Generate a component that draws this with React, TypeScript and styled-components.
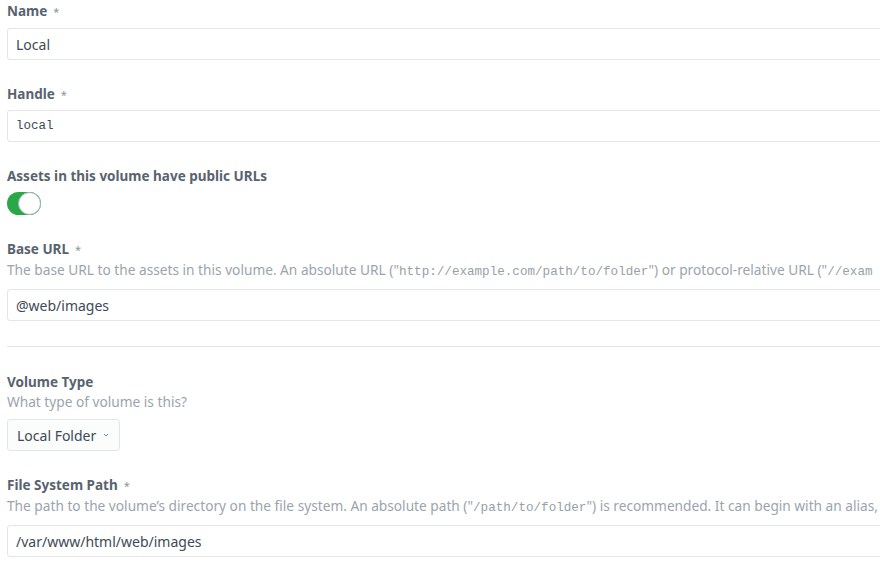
import React from "react";
import styled, { createGlobalStyle } from "styled-components";

const Global = createGlobalStyle`
  html, body { margin: 0; padding: 0; background: #fff; overflow: hidden; }
  body { font-family: "Noto Sans", "Open Sans", sans-serif; }
`;

const Page = styled.div`
  width: 880px;
  height: 571px;
  overflow: hidden;
  background: #fff;
`;

const Form = styled.div`
  width: 940px;
  padding: 2px 0 0 7px;
  display: flex;
  flex-direction: column;
`;

const Field = styled.div`
  display: flex;
  flex-direction: column;
  margin-bottom: 25px;
`;

const Heading = styled.div<{ $gap?: number }>`
  font-size: 13.5px;
  font-weight: 700;
  line-height: 18px;
  color: #58636f;
  margin-bottom: ${(p) => p.$gap ?? 7}px;
`;

const Required = styled.span`
  color: #8a949e;
  font-weight: 400;
  margin-left: 6px;
  font-size: 11px;
`;

const Instructions = styled.div`
  font-size: 13.7px;
  line-height: 20px;
  color: #9ba4ad;
  white-space: nowrap;
  margin-bottom: 7px;
`;

const Code = styled.code`
  font-family: "Liberation Mono", "DejaVu Sans Mono", monospace;
  font-size: 12.6px;
  color: #979fa8;
`;

const TextInput = styled.div<{ $mono?: boolean }>`
  box-sizing: border-box;
  height: 32px;
  border: 1px solid #e3e6e9;
  border-radius: 3px;
  padding: 0 8px;
  display: flex;
  align-items: center;
  font-family: ${(p) =>
    p.$mono ? '"Liberation Mono", "DejaVu Sans Mono", monospace' : '"Noto Sans", "Open Sans", sans-serif'};
  font-size: ${(p) => (p.$mono ? "12.5px" : "14px")};
  color: #3e4a56;
`;

const Toggle = styled.div`
  width: 34px;
  height: 23px;
  border-radius: 12px;
  background: #29a848;
  position: relative;
`;

const Knob = styled.div`
  position: absolute;
  right: 0;
  top: 0;
  width: 23px;
  height: 23px;
  border-radius: 50%;
  box-sizing: border-box;
  background: #fff;
  border: 1px solid #a9b0b6;
`;

const Divider = styled.hr`
  border: 0;
  border-top: 1px solid #e4e7ea;
  margin: 0 0 26px 0;
`;

const SelectBtn = styled.div`
  align-self: flex-start;
  box-sizing: border-box;
  height: 32px;
  padding: 0 10px 0 9px;
  border: 1px solid #e3e6e9;
  border-radius: 3px;
  background: #fbfcfc;
  display: flex;
  align-items: center;
  gap: 7px;
  font-size: 14px;
  color: #3e4a56;
`;

const Chevron = styled.svg`
  width: 6px;
  height: 6px;
`;

export default function App() {
  return (
    <Page>
      <Global />
      <Form>
        <Field>
          <Heading>
            Name<Required>*</Required>
          </Heading>
          <TextInput>Local</TextInput>
        </Field>
        <Field>
          <Heading $gap={6}>
            Handle<Required>*</Required>
          </Heading>
          <TextInput $mono>local</TextInput>
        </Field>
        <Field>
          <Heading>Assets in this volume have public URLs</Heading>
          <Toggle>
            <Knob />
          </Toggle>
        </Field>
        <Field>
          <Heading $gap={1}>
            Base URL<Required>*</Required>
          </Heading>
          <Instructions>
            The base URL to the assets in this volume. An absolute URL ("<Code>http://example.com/path/to/folder</Code>") or
            protocol-relative URL ("<Code>//exam</Code>
          </Instructions>
          <TextInput>@web/images</TextInput>
        </Field>
        <Divider />
        <Field>
          <Heading $gap={1}>Volume Type</Heading>
          <Instructions>What type of volume is this?</Instructions>
          <SelectBtn>
            Local Folder
            <Chevron viewBox="0 0 6 6">
              <path d="M1 2 L3 4 L5 2" fill="none" stroke="#7b8793" strokeWidth="1" />
            </Chevron>
          </SelectBtn>
        </Field>
        <Field>
          <Heading $gap={1}>
            File System Path<Required>*</Required>
          </Heading>
          <Instructions>
            The path to the volume’s directory on the file system. An absolute path ("<Code>/path/to/folder</Code>") is
            recommended. It can begin with an alias,
          </Instructions>
          <TextInput>/var/www/html/web/images</TextInput>
        </Field>
      </Form>
    </Page>
  );
}
